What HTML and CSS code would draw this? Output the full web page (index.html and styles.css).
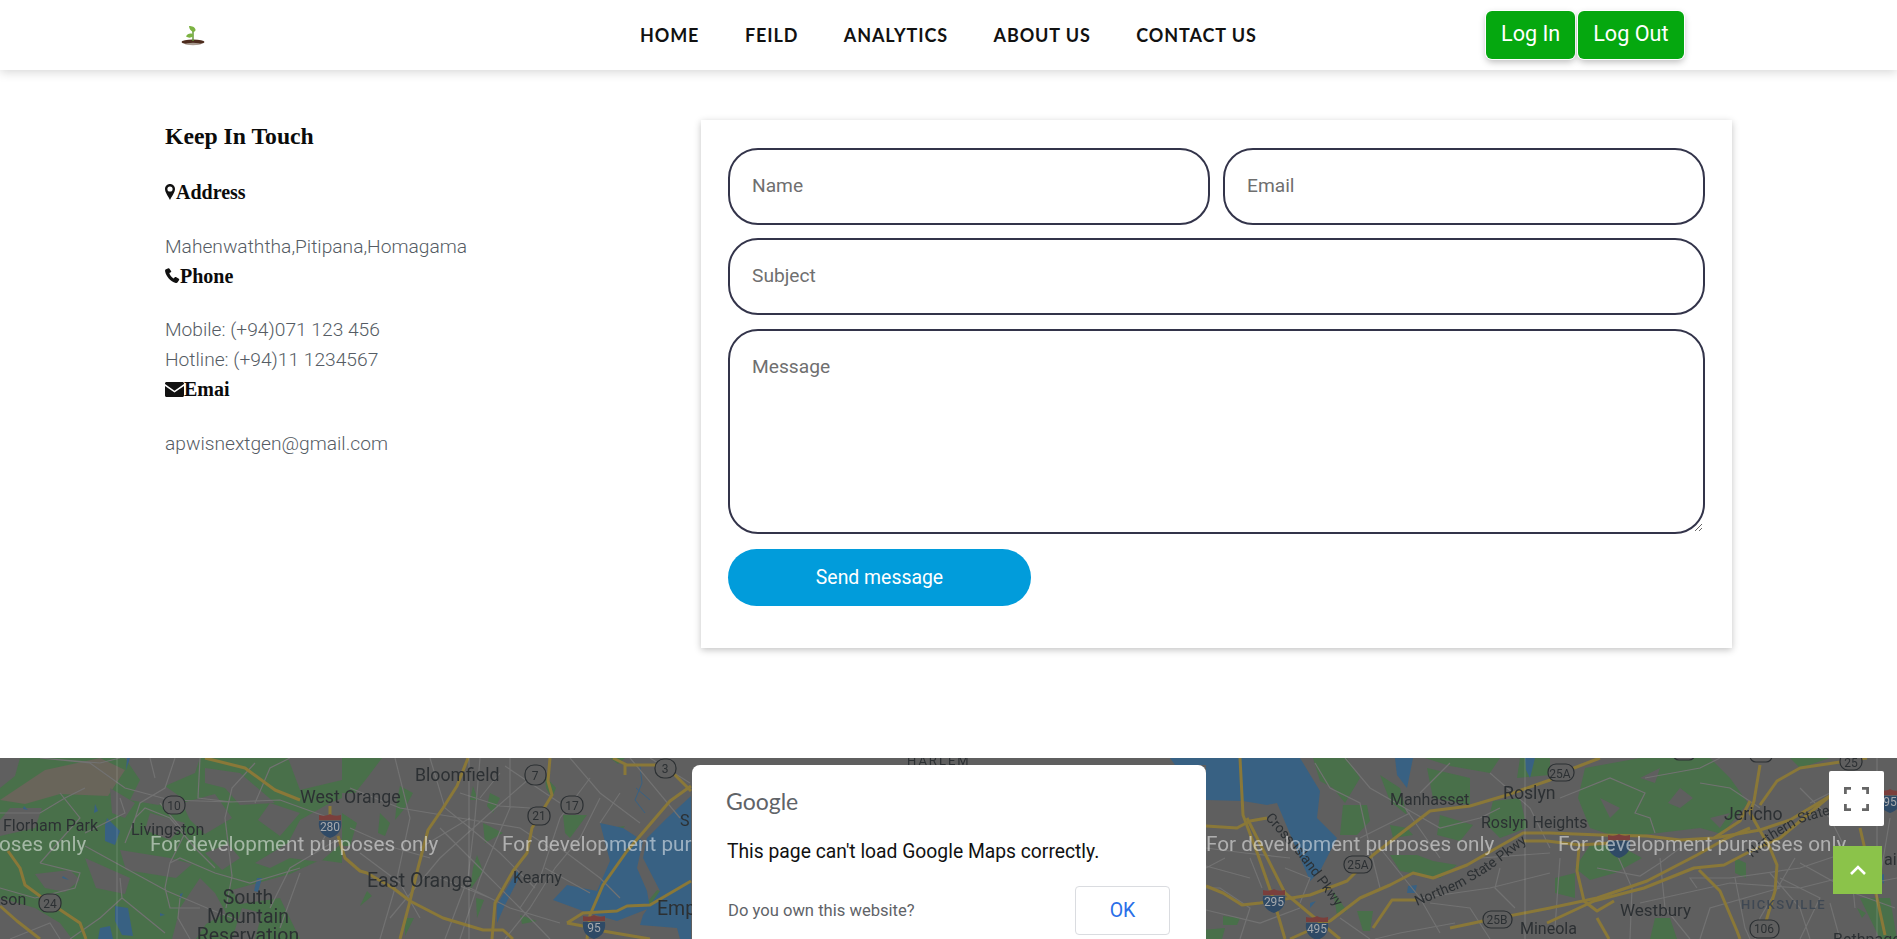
FILE: index.html
```html
<!DOCTYPE html>
<html lang="en">
<head>
<meta charset="utf-8">
<title>Contact</title>
<link rel="stylesheet" href="styles.css">
</head>
<body>
<header class="site-header">
  <a class="logo" href="#" aria-label="Home">
    <svg width="26" height="24" viewBox="0 0 26 24">
      <ellipse class="soil" cx="13" cy="19" rx="11.5" ry="2.6"/>
      <ellipse class="soil-shade" cx="13" cy="21" rx="8" ry="1.2"/>
      <path class="stem" d="M13 18V6"/>
      <path class="leaf" d="M13 9C11 8 9 6 9 3c3 0 6 1 6.500 3.500C15.800 8 14.500 9 13 9z"/>
      <path class="leaf" d="M13 13.500c-2 1.500-5 1.500-7 0 1-2.500 4-3.500 6.500-2.500.7.500.8 1.500.5 2.500z"/>
    </svg>
  </a>
  <nav class="main-nav">
    <a href="#">HOME</a>
    <a href="#">FEILD</a>
    <a href="#">ANALYTICS</a>
    <a href="#">ABOUT US</a>
    <a href="#">CONTACT US</a>
  </nav>
  <div class="auth">
    <a class="auth-btn" href="#">Log In</a>
    <a class="auth-btn" href="#">Log Out</a>
  </div>
</header>

<main class="contact">
  <section class="info">
    <h3 class="info-heading">Keep In Touch</h3>
    <h4 class="info-title">
      <svg class="ico ico-pin" width="10" height="16" viewBox="0 0 10 16"><path d="M5 0C2.200 0 0 2.200 0 5c0 3.500 3.400 7.500 5 11 1.600-3.500 5-7.500 5-11 0-2.800-2.200-5-5-5zm0 7.600A2.600 2.600 0 1 1 5 2.400a2.600 2.600 0 0 1 0 5.200z"/></svg>Address
    </h4>
    <p class="info-text">Mahenwaththa,Pitipana,Homagama</p>
    <h4 class="info-title">
      <svg class="ico" width="15" height="15" viewBox="0 0 15 15"><path d="M3.400.3 1 1.200C.2 1.500-.1 2.400.1 3.300 1 8.300 5.500 13.500 10.700 14.900c.9.200 1.700-.1 2.100-.8l1.300-2.200c.2-.4.100-.8-.3-1.100l-2.900-1.800c-.4-.2-.8-.1-1.100.2L8.600 10.600C6.800 9.600 4.900 7.300 4.300 5.100l1.500-.8c.4-.2.500-.6.400-1L4.500.7C4.300.3 3.800.1 3.400.3z"/></svg>Phone
    </h4>
    <p class="info-text">Mobile: (+94)071 123 456</p>
    <p class="info-text">Hotline: (+94)11 1234567</p>
    <h4 class="info-title">
      <svg class="ico" width="19" height="15" viewBox="0 0 19 15"><path d="M1.500 0h16C18.300 0 19 .7 19 1.500v.6L9.500 8.700 0 2.100v-.6C0 .7.700 0 1.500 0zM0 4l9.500 6.500L19 4v9.500c0 .8-.7 1.500-1.500 1.500h-16C.7 15 0 14.300 0 13.500z"/></svg>Emai
    </h4>
    <p class="info-text">apwisnextgen@gmail.com</p>
  </section>

  <form class="card">
    <div class="row">
      <input class="field" type="text" placeholder="Name">
      <input class="field" type="text" placeholder="Email">
    </div>
    <input class="field" type="text" placeholder="Subject">
    <textarea class="field field-area" placeholder="Message"></textarea>
    <button class="send" type="button">Send message</button>
  </form>
</main>

<section class="map">
  <svg class="map-svg" width="1897" height="181" viewBox="0 0 1897 181">
    <defs>
      <g id="shield">
        <path class="sh-blue" d="M-11-5H11C12 3 9 9 0 12-9 9-12 3-11-5z"/>
        <path class="sh-red" d="M-11-11C-7-10-3-10 0-12 3-10 7-10 11-11L11-6H-11z"/>
      </g>
      <path id="p-cross" d="M1265 60 1300 100 1338 152"/>
      <path id="p-north1" d="M1417 148 1460 130 1490 112 1527 84"/>
      <path id="p-north2" d="M1752 100 1775 80 1800 65 1835 55"/>
    </defs>
    <g class="map-base">
      <rect class="land" width="1897" height="181"/>
      <!-- west green -->
      <path class="green" d="M0 0H342V181H0z"/>
      <polygon class="tan" points="0,42 45,12 100,0 125,12 108,38 60,36 25,46"/>
      <polygon class="land" points="0,30 15,18 20,0 0,0"/>
      <polygon class="land" points="125,0 200,0 195,15 165,28 182,40 158,47 130,42 140,22"/>
      <polygon class="land" points="205,10 240,15 275,45 240,47 225,30 205,25"/>
      <polygon class="land" points="288,0 342,0 342,22 300,32"/>
      <polygon class="land" points="270,45 300,55 280,78 258,62"/>
      <polygon class="land" points="182,45 215,36 232,60 205,76 190,62"/>
      <polygon class="land" points="35,116 70,112 80,122 65,134 45,130"/>
      <polygon class="land" points="0,140 35,150 60,165 72,181 0,181"/>
      <polygon class="land" points="180,150 200,120 215,135 226,155 206,166 196,181 172,181"/>
      <polygon class="land" points="232,132 290,116 320,102 342,105 342,181 300,181 280,140 240,146"/>
      <polygon class="land" points="300,62 330,45 342,40 342,85 320,104 290,100 270,110 255,105 288,85"/>
      <polygon class="land" points="120,92 170,100 192,106 176,120 126,112"/>
      <polygon class="land" points="85,100 130,120 125,136 96,130"/>
      <polygon class="land" points="0,62 10,50 42,50 35,70 0,78"/>
      <polygon class="land" points="205,95 228,86 240,100 222,112"/>
      <polygon class="land" points="110,30 135,45 125,60 112,55"/>
      <polygon class="land" points="150,55 185,65 170,82 145,72"/>
      <polygon class="land" points="242,150 262,155 255,181 232,181"/>
      <!-- center green -->
      <path class="green" d="M342 0H382L367 20 355 35H342zM342 55 357 65 350 88H342zM400 28 413 35 405 50 395 62 397 42zM380 55 390 65 385 78 378 75zM490 35 500 40 493 55 487 48zM473 28 478 42 470 42zM483 65 503 75 485 85zM477 97 483 113 470 132 473 110zM367 133 360 148 372 138zM563 57 587 57 570 80 565 75zM520 157 537 163 522 166zM657 132 680 140 645 147zM545 18 556 30 552 40 546 30zM610 0 625 0 618 6zM405 160 414 160 405 178zM610 70 625 68 615 80zM476 140 484 142 477 160z"/>
      <!-- east green -->
      <path class="green" d="M1313 0H1347L1360 20 1345 45 1333 30 1320 23zM1343 47 1367 47 1370 63 1357 77 1340 77zM1380 17 1400 30 1407 57 1390 43zM1427 10 1470 20 1470 47 1433 40zM1390 67 1407 70 1413 77 1393 80zM1390 97 1417 97 1433 103 1457 107 1440 120 1400 113zM1493 43 1520 40 1527 70 1500 80 1487 67zM1440 57 1473 67 1460 83 1437 77zM1357 153 1373 153 1370 173 1363 173zM1223 158 1240 160 1237 167 1223 167zM1333 133 1347 153 1337 157zM1520 0H1550L1550 17 1517 20zM1425 0H1500L1490 15 1450 8zM1203 172 1225 170 1222 181H1206z"/>
      <path class="green" d="M1585 10 1640 0H1710L1730 20 1748 45 1722 76 1700 70 1650 76 1620 80 1590 70 1578 40zM1590 87 1620 88 1642 100 1615 115 1590 122 1575 110zM1735 100 1746 105 1746 120 1735 115zM1555 120 1575 115 1575 140 1555 135zM1655 160 1670 160 1677 181 1650 181zM1860 140 1890 140 1897 181 1880 181zM1857 150 1866 155 1862 160zM1790 0H1830L1800 10z"/>
      <path class="land" d="M1680 30 1693 40 1680 50 1668 45zM1640 20 1660 10 1655 25zM1600 40 1620 50 1610 60zM1710 60 1730 55 1720 70z"/>
      <!-- water -->
      <path class="water" d="M105 67 107 60 120 73 115 87 105 83zM115 148 128 150 133 178 122 177 115 163zM100 170 110 168 113 181H98zM257 120H262L258 134 254 133zM127 0 130 0 126 12zM63 118 69 122 62 120zM180 136 183 135 180 142zM160 155 165 157 160 158zM95 46 98 53 94 55zM24 48 28 52 23 51z"/>
      <path class="water" d="M600 65 623 70 643 83 637 110 647 133 650 150 617 163 583 153 553 142 567 127 597 133 610 103z"/>
      <path class="water" d="M691 38 667 60 647 80 643 100 660 133 643 157 640 167 677 170 680 181H691z"/>
      <path class="water" d="M497 147 517 113 520 118 505 147 497 165z"/>
      <path class="water-line" d="M640 8 642 25 635 42 645 55M636 30 650 42"/>
      <path class="water" d="M1170 0H1206V7H1175zM1206 0H1300L1320 33 1317 60 1337 80 1320 113 1310 123 1293 83 1277 45 1267 47 1243 43 1206 42z"/>
      <path class="water" d="M1395 0H1413L1407 30 1397 17zM1525 0H1535L1530 20 1526 12zM1408 128 1417 127 1415 135 1407 135zM1310 145 1316 143 1310 150z"/>
      <path class="water" d="M1878 118 1884 116 1884 126z"/>
      <!-- minor roads -->
      <path class="minor" d="M40 0 100 5 120 0M40 0 90 5 125 30 170 42 230 44 280 42 330 60M132 70 140 45 165 30 175 0M125 85 135 60 145 50 170 60 195 90 215 110M120 40 125 55 85 75M0 55 40 55 65 40 85 30M60 35 80 60 40 105M160 45 185 75 170 105 165 130 170 150 200 150M170 105 180 100 215 115 250 125 300 110M85 88 167 133 207 150 245 165M232 118 225 60 232 30 255 5M232 118 226 150M200 0 198 40 232 44M150 0 155 20M40 105 80 115 75 130 35 140 0 130M120 120 122 140 100 160 70 181M122 140 165 175 M180 140 178 160 190 181M300 115 280 170M340 80 315 95 290 110 270 150M330 70 315 95M10 181 50 165 60 181M255 45 270 10 290 0"/>
      <path class="minor" d="M350 30 400 50 460 60 520 70 550 90M395 0 410 60 395 130 380 181M430 0 445 50 470 70 500 95 535 130M480 0 475 60 468 120 445 181M510 0 510 50 480 120 460 181M530 20 490 55 440 100 390 160M570 0 600 35 640 65M590 20 560 60 540 120 520 150M600 40 580 80 555 110 530 150 505 181M360 95 400 125 420 160M440 70 480 110 520 150 550 181M350 70 395 90 430 100M470 130 510 150 560 165M460 35 500 48 530 50M505 8 560 45M620 35 600 65M440 120 490 140M420 90 470 60M650 0 690 25M630 0 680 60M545 110 590 135M560 90 600 120 620 140M480 40 500 15"/>
      <path class="minor" d="M1225 100 1206 110M1206 90 1245 95 1290 100M1206 108 1250 120M1206 152 1260 165 1300 150M1240 181 1250 150 1220 130 1206 130M1285 110 1310 120 1300 145M1250 100 1262 130M1315 5 1330 30 1360 45 1370 90 1380 130M1345 0 1370 30 1405 50 1440 100M1405 50 1440 70 1480 60 1500 50M1360 80 1390 65 1410 55M1380 90 1420 140 1440 175M1420 140 1490 130 1550 115M1500 110 1495 130 1515 150M1480 100 1550 95M1455 165 1400 175 1375 181M1420 35 1450 5M1490 15 1530 50 1550 90M1430 145 1470 150 1490 181M1340 160 1370 181"/>
      <path class="minor" d="M1560 40 1610 20 1645 35 1635 55 1650 60 1655 75M1645 20 1700 10 1720 0M1700 25 1730 30 1760 50M1597 110 1640 118 1660 105 1680 90M1612 85 1632 130 1630 181M1660 100 1665 150 1690 181M1697 130 1690 120 1730 120 1800 110 1860 90M1640 145 1730 125 1800 130 1880 110M1735 120 1745 170 1750 181M1770 115 1800 150 1810 181M1780 120 1820 140 1800 181M1795 100 1760 160 1755 181M1800 30 1830 60 1850 100 1855 150M1800 105 1845 130 1897 120M1810 45 1840 30M1700 181 1710 150 1780 130M1560 100 1555 170M1580 150 1625 130M1890 60 1880 120M1830 145 1840 181M1840 130 1895 150"/>
      <!-- highways -->
      <g class="hw">
        <path d="M205 0 245 10 275 32 300 42"/>
        <path d="M330 48 330 60M338 78 345 100 360 113 367 115 393 130 410 143 443 160 483 172 503 172 513 181"/>
        <path d="M8 93 20 110 25 127 40 138 62 153 80 165 86 181M0 148 17 163 40 181"/>
        <path d="M468 0 457 28 443 50 428 72 418 110 410 143 400 181"/>
        <path d="M550 0 548 23 552 37 532 70 527 95 513 113 495 145 492 181"/>
        <path d="M613 0 627 7 657 7 675 17 691 33M625 7 625 17"/>
        <path d="M691 28 670 43 627 93 603 127 590 157 587 181"/>
        <path d="M567 165 583 155 617 153 627 148 650 147 691 123M567 165 583 168 603 173 650 181"/>
        <path d="M1240 0 1243 57 1258 97 1273 140 1285 181"/>
        <path d="M1206 68 1237 70 1250 63 1267 60"/>
        <path d="M1206 128 1223 135 1242 147 1260 145 1310 137 1347 123 1357 113 1373 97 1417 63 1430 53 1470 48 1507 37 1550 22 1574 10 1600 0"/>
        <path d="M1290 181 1330 163 1360 140 1390 127 1413 115 1433 120 1467 107 1500 88 1523 75 1550 75 1600 77 1647 78 1680 82 1714 80 1760 72 1790 62 1830 38"/>
        <path d="M1523 83 1547 83 1580 87 1610 85"/>
        <path d="M1247 60 1285 135 1340 181"/>
        <path d="M1373 170 1392 142 1417 142"/>
        <path d="M1450 170 1483 163 1550 150 1597 140 1647 123 1697 97 1727 80 1750 70"/>
        <path d="M1547 165 1594 143 1644 130 1694 110 1724 107 1747 95 1780 80 1830 38"/>
        <path d="M1579 90 1577 113 1584 143 1597 153 1614 143"/>
        <path d="M1699 112 1720 133 1737 173 1740 181"/>
        <path d="M1597 160 1609 181"/>
        <path d="M1760 7 1754 43 1750 55 1770 90 1777 107 1775 133 1764 170"/>
        <path d="M1760 47 1777 23 1800 10 1867 0"/>
        <path d="M1860 70 1867 100 1877 140 1885 177"/>
        <path d="M1714 80 1740 63 1750 43"/>
      </g>
      <path class="tile" d="M117 0V181M469 0V181M1525 0V181M1877 0V181"/>
    </g>
    <g class="map-labels">
      <text class="lbl" x="3" y="73">Florham Park</text>
      <text class="lbl" x="131" y="77">Livingston</text>
      <text class="lbl" x="0" y="147">son</text>
      <text class="lbl lbl-lg" x="300" y="45">West Orange</text>
      <text class="lbl lbl-xl mid" x="248" y="146">South</text>
      <text class="lbl lbl-xl mid" x="248" y="165">Mountain</text>
      <text class="lbl lbl-xl mid" x="248" y="184">Reservation</text>
      <text class="lbl lbl-lg" x="415" y="23">Bloomfield</text>
      <text class="lbl lbl-xl" x="367" y="129">East Orange</text>
      <text class="lbl" x="513" y="125">Kearny</text>
      <text class="lbl lbl-xl" x="657" y="157">Emp</text>
      <text class="lbl" x="680" y="68">S</text>
      <text class="lbl lbl-hm" x="907" y="7">HARLEM</text>
      <text class="lbl" x="1390" y="47">Manhasset</text>
      <text class="lbl lbl-lg" x="1503" y="41">Roslyn</text>
      <text class="lbl" x="1481" y="70">Roslyn Heights</text>
      <text class="lbl" x="1520" y="176">Mineola</text>
      <text class="lbl lbl-md" x="1620" y="158">Westbury</text>
      <text class="lbl lbl-lg" x="1724" y="62">Jericho</text>
      <text class="lbl lbl-hv" x="1741" y="151">HICKSVILLE</text>
      <text class="lbl" x="1833" y="187">Bethpage</text>
      <text class="lbl" x="1884" y="107">ain</text>
      <text class="lbl lbl-road"><textPath href="#p-cross">Cross Island Pkwy</textPath></text>
      <text class="lbl lbl-road"><textPath href="#p-north1">Northern State Pkwy</textPath></text>
      <text class="lbl lbl-road"><textPath href="#p-north2">Northern State</textPath></text>

      <g class="badge"><rect x="163" y="38" width="22" height="18" rx="8"/><text x="174" y="52">10</text></g>
      <g class="badge"><rect x="39" y="136" width="22" height="18" rx="8"/><text x="50" y="150">24</text></g>
      <g class="badge"><rect x="525" y="7" width="21" height="20" rx="9"/><text x="535" y="22">7</text></g>
      <g class="badge"><rect x="655" y="1" width="21" height="19" rx="9"/><text x="665" y="15">3</text></g>
      <g class="badge"><rect x="528" y="49" width="22" height="18" rx="8"/><text x="539" y="62">21</text></g>
      <g class="badge"><rect x="561" y="38" width="22" height="18" rx="8"/><text x="572" y="52">17</text></g>
      <g class="badge"><rect x="1344" y="98" width="28" height="17" rx="8"/><text x="1358" y="111">25A</text></g>
      <g class="badge"><rect x="1548" y="6" width="26" height="17" rx="8"/><text x="1560" y="20">25A</text></g>
      <g class="badge"><rect x="1483" y="153" width="29" height="17" rx="8"/><text x="1497" y="166">25B</text></g>
      <g class="badge"><rect x="1750" y="162" width="29" height="18" rx="8"/><text x="1764" y="175">106</text></g>
      <g class="badge"><rect x="1840" y="-5" width="22" height="17" rx="8"/><text x="1851" y="9">25</text></g>
      <g class="badge"><rect x="1673" y="-10" width="22" height="12" rx="6"/></g>
      <g class="badge"><rect x="1750" y="-10" width="22" height="14" rx="6"/></g>

      <g class="interstate"><use href="#shield" x="330" y="68"/><text x="330" y="73">280</text></g>
      <g class="interstate"><use href="#shield" x="594" y="169"/><text x="594" y="174">95</text></g>
      <g class="interstate"><use href="#shield" x="1274" y="143"/><text x="1274" y="148">295</text></g>
      <g class="interstate"><use href="#shield" x="1317" y="170"/><text x="1317" y="175">495</text></g>
      <g class="interstate"><use href="#shield" x="1619" y="88"/></g>
      <g class="interstate"><use href="#shield" x="1890" y="43"/><text x="1890" y="48">95</text></g>

      <text class="dev" x="-202" y="93">For development purposes only</text>
      <text class="dev" x="150" y="93">For development purposes only</text>
      <text class="dev" x="502" y="93">For development purposes only</text>
      <text class="dev" x="1206" y="93">For development purposes only</text>
      <text class="dev" x="1558" y="93">For development purposes only</text>
    </g>
  </svg>

  <div class="dialog">
    <div class="g-logo">Google</div>
    <p class="dialog-msg">This page can't load Google Maps correctly.</p>
    <div class="dialog-foot">
      <a class="dialog-link" href="#">Do you own this website?</a>
      <button class="dialog-ok" type="button">OK</button>
    </div>
  </div>

  <button class="fullscreen" type="button" aria-label="Toggle fullscreen">
    <svg width="25" height="24" viewBox="0 0 25 24"><path d="M0 7V0H7V2.800H2.800V7zM18 0H25V7H22.200V2.800H18zM0 17H2.800V21.200H7V24H0zM22.200 17H25V24H18V21.200H22.200z"/></svg>
  </button>
</section>

<a class="back-top" href="#" aria-label="Back to top">
  <svg width="18" height="12" viewBox="0 0 18 12"><path d="M2 10 9 3l7 7"/></svg>
</a>
</body>
</html>
```
FILE: styles.css
```css
* { box-sizing: border-box; }
html, body { margin: 0; padding: 0; height: 939px; overflow: hidden; background: #fff; }
body { font-family: "Roboto", "Liberation Sans", sans-serif; color: #111; }
a { text-decoration: none; }

.site-header {
  position: relative;
  z-index: 5;
  display: grid;
  grid-template-columns: 640px 846px auto;
  align-items: center;
  height: 70px;
  background: #fff;
  box-shadow: 0 2px 10px rgba(0, 0, 0, .17);
}
.logo { display: block; height: 24px; margin-left: 180px; }
.logo svg { display: block; }
.soil { fill: #4d2c1d; }
.soil-shade { fill: #a89a90; }
.stem { stroke: #5d9334; stroke-width: 1.4; fill: none; }
.leaf { fill: #7cb342; }

.main-nav { display: flex; gap: 45.500px; }
.main-nav a {
  font-family: "Lato", "Liberation Sans", sans-serif;
  font-weight: 700;
  font-size: 18px;
  letter-spacing: .9px;
  color: #111;
  white-space: nowrap;
  margin-top: -1px;
}
.auth { display: flex; gap: 3px; }
.auth-btn {
  display: block;
  height: 48px;
  line-height: 46px;
  padding: 0 15px;
  background: #05a80f;
  color: #fff;
  font-size: 21.600px;
  border-radius: 6px;
  box-shadow: 0 0 0 1px #fff, 0 3px 7px rgba(0, 0, 0, .28);
}

.contact {
  display: flex;
  height: 688px;
  padding: 50px 0 0 165px;
}
.info { width: 536px; flex: none; }
.info-heading {
  margin: 1px 0 27px;
  font-family: "Liberation Serif", serif;
  font-weight: 700;
  font-size: 23.700px;
  line-height: 30px;
  color: #0b0b0b;
}
.info-title {
  display: flex;
  align-items: center;
  margin: -1px 0 24.500px;
  font-family: "Liberation Serif", serif;
  font-weight: 700;
  font-size: 20px;
  line-height: 30px;
  color: #0b0b0b;
}
.ico { flex: none; fill: #111; }
.ico-pin { margin-right: 1px; }
.info-text {
  margin: 0;
  font-size: 19.200px;
  font-weight: 300;
  line-height: 30px;
  color: #555c64;
}

.card {
  display: flex;
  flex-direction: column;
  gap: 13px;
  align-items: flex-start;
  width: 1031px;
  height: 528px;
  padding: 28px 27px 0;
  background: #fff;
  box-shadow: 0 2px 7px rgba(0, 0, 0, .24);
}
.row { display: flex; gap: 13px; width: 100%; }
.field {
  display: block;
  width: 100%;
  min-width: 0;
  height: 77px;
  padding: 0 22px 2px;
  background: #fff;
  border: 2px solid #33344a;
  border-radius: 30px;
  font-family: "Roboto", sans-serif;
  font-size: 19.200px;
  color: #333;
  outline: none;
}
.field::placeholder { color: #6f6f6f; opacity: 1; }
.field-area { height: 205px; margin-top: 1px; padding-top: 24px; resize: vertical; }
.send {
  width: 303px;
  height: 57px;
  margin-top: 2px;
  background: #019cdb;
  border: 0;
  border-radius: 30px;
  color: #fff;
  font-family: "Roboto", sans-serif;
  font-weight: 400;
  font-size: 19.400px;
}

.map { position: relative; height: 181px; overflow: hidden; background: #5f5f5f; }
.map-svg { display: block; }
.map-base { filter: blur(.6px); }
.map-labels { filter: blur(.25px); }
.land { fill: #5f5f5f; }
.tan { fill: #69655a; }
.green { fill: #49704a; }
.water { fill: #386183; }
.water-line { fill: none; stroke: #386183; stroke-width: 1; }
.minor { fill: none; stroke: #727272; stroke-width: 1.200; }
.hw path { fill: none; stroke: #8a7838; stroke-width: 3; stroke-linejoin: round; }
.tile { fill: none; stroke: rgba(255, 255, 255, .16); stroke-width: 1; }

.lbl { font-family: "Roboto", sans-serif; font-size: 16px; fill: #2c3033; }
.lbl-md { font-size: 17px; }
.lbl-lg { font-size: 17.700px; }
.lbl-xl { font-size: 19.500px; }
.mid { text-anchor: middle; }
.lbl-hm { font-size: 13px; letter-spacing: 2px; }
.lbl-hv { font-size: 13px; font-weight: 500; letter-spacing: 1.400px; fill: #3f4853; }
.lbl-road { font-size: 14px; }
.badge rect { fill: #5f5f5f; stroke: #2c3033; stroke-width: 1.200; }
.badge text { font-family: "Roboto", sans-serif; font-size: 12px; fill: #2c3033; text-anchor: middle; }
.sh-blue { fill: #2f4a66; }
.sh-red { fill: #7a3f3c; }
.interstate text { font-family: "Roboto", sans-serif; font-size: 12px; fill: #a6a9ad; text-anchor: middle; }
.dev { font-family: "Roboto", sans-serif; font-size: 20.700px; fill: rgba(255, 255, 255, .5); }

.dialog {
  position: absolute;
  left: 692px;
  top: 7px;
  width: 514px;
  height: 240px;
  padding: 20.500px 35px 0;
  background: #fff;
  border-radius: 8px;
}
.g-logo {
  font-family: "Lato", sans-serif;
  font-size: 23px;
  line-height: 30px;
  color: #5f6368;
  margin-left: -1px;
}
.dialog-msg {
  margin: 24px 0 0;
  font-size: 19.300px;
  line-height: 24px;
  color: #111;
}
.dialog-foot {
  display: flex;
  align-items: center;
  justify-content: space-between;
  width: 443px;
  margin-top: 22px;
}
.dialog-link { font-size: 16.600px; color: #5f6368; margin-left: 1px; }
.dialog-ok {
  width: 95px;
  height: 49px;
  background: #fff;
  border: 1px solid #dadce0;
  border-radius: 4px;
  color: #2a6fe8;
  font-family: "Roboto", sans-serif;
  font-size: 19.500px;
}

.fullscreen {
  position: absolute;
  left: 1829px;
  top: 13px;
  width: 55px;
  height: 55px;
  display: flex;
  align-items: center;
  justify-content: center;
  padding: 0;
  background: #fff;
  border: 0;
  border-radius: 2px;
}
.fullscreen svg { fill: #666; }

.back-top {
  position: fixed;
  left: 1833px;
  top: 846px;
  width: 49px;
  height: 48px;
  display: flex;
  align-items: center;
  justify-content: center;
  background: #8bc34a;
}
.back-top svg { fill: none; stroke: #fff; stroke-width: 2.600; }
```
